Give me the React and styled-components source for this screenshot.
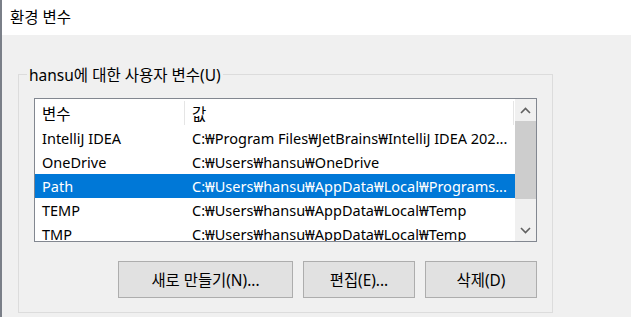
import React from "react";
import styled, { createGlobalStyle } from "styled-components";

const GlobalStyle = createGlobalStyle`
  html, body {
    margin: 0;
    padding: 0;
    background: #f0f0f0;
  }
  body {
    font-family: "Noto Sans", "Noto Sans CJK KR", sans-serif;
    font-size: 14.5px;
    color: #000;
  }
`;

const rows = [
  { name: "IntelliJ IDEA", value: "C:₩Program Files₩JetBrains₩IntelliJ IDEA 202..." },
  { name: "OneDrive", value: "C:₩Users₩hansu₩OneDrive" },
  { name: "Path", value: "C:₩Users₩hansu₩AppData₩Local₩Programs...", selected: true },
  { name: "TEMP", value: "C:₩Users₩hansu₩AppData₩Local₩Temp" },
  { name: "TMP", value: "C:₩Users₩hansu₩AppData₩Local₩Temp" },
];

export default function App() {
  return (
    <>
      <GlobalStyle />
      <Window>
        <TitleBar>환경 변수</TitleBar>
        <Body>
          <GroupBox>
            <Legend>hansu에 대한 사용자 변수(U)</Legend>
            <ListBox>
              <ListArea>
                <HeaderRow>
                  <HeaderCell $width={150}>변수</HeaderCell>
                  <HeaderCell $width={329}>값</HeaderCell>
                </HeaderRow>
                {rows.map((row) => (
                  <Row key={row.name} $selected={row.selected}>
                    <Cell $width={150}>{row.name}</Cell>
                    <Cell $width={329}>{row.value}</Cell>
                  </Row>
                ))}
              </ListArea>
              <ScrollBar>
                <ArrowButton>
                  <svg width="11" height="7" viewBox="0 0 11 7">
                    <path d="M1 6 L5.5 1.5 L10 6" fill="none" stroke="#606060" strokeWidth="1.6" />
                  </svg>
                </ArrowButton>
                <Track>
                  <Thumb />
                </Track>
                <ArrowButton>
                  <svg width="11" height="7" viewBox="0 0 11 7">
                    <path d="M1 1 L5.5 5.5 L10 1" fill="none" stroke="#606060" strokeWidth="1.6" />
                  </svg>
                </ArrowButton>
              </ScrollBar>
            </ListBox>
            <ButtonRow>
              <Button $width={175}>새로 만들기(N)...</Button>
              <Button $width={112}>편집(E)...</Button>
              <Button $width={112}>삭제(D)</Button>
            </ButtonRow>
          </GroupBox>
        </Body>
      </Window>
    </>
  );
}

const Window = styled.div`
  width: 631px;
  height: 317px;
  box-sizing: border-box;
  border-left: 2px solid #7a7f88;
  overflow: hidden;
  display: flex;
  flex-direction: column;
`;

const TitleBar = styled.div`
  height: 35px;
  flex-shrink: 0;
  background: #fff;
  display: flex;
  align-items: center;
  padding-left: 8px;
  font-size: 15.5px;
  padding-bottom: 2px;
  box-sizing: border-box;
`;

const Body = styled.div`
  padding: 39px 0 0 16px;
`;

const GroupBox = styled.div`
  width: 535px;
  box-sizing: border-box;
  border: 1px solid #dcdcdc;
  padding: 0 15px 14px 15px;
`;

const Legend = styled.div`
  width: fit-content;
  margin: -10px 0 0 -7px;
  padding: 0 2px;
  height: 20px;
  line-height: 20px;
  background: #f0f0f0;
  font-size: 15.5px;
`;

const ListBox = styled.div`
  margin-top: 13px;
  width: 503px;
  height: 144px;
  box-sizing: border-box;
  border: 1px solid #828790;
  background: #fff;
  display: flex;
  overflow: hidden;
`;

const ListArea = styled.div`
  flex: 1;
  overflow: hidden;
`;

const HeaderRow = styled.div`
  display: flex;
  height: 27px;
  font-size: 15.5px;
`;

const HeaderCell = styled.div`
  width: ${(p) => p.$width}px;
  flex-shrink: 0;
  box-sizing: border-box;
  padding-left: 7px;
  display: flex;
  align-items: center;
  border-right: 1px solid #e5e5e5;
  margin: 2px 0 1px;
`;

const Row = styled.div`
  display: flex;
  height: 24px;
  align-items: center;
  background: ${(p) => (p.$selected ? "#0078d7" : "transparent")};
  color: ${(p) => (p.$selected ? "#fff" : "#000")};
`;

const Cell = styled.div`
  width: ${(p) => p.$width}px;
  flex-shrink: 0;
  box-sizing: border-box;
  padding-left: 7px;
  white-space: nowrap;
  overflow: hidden;
`;

const ScrollBar = styled.div`
  width: 21px;
  flex-shrink: 0;
  background: #f0f0f0;
  display: flex;
  flex-direction: column;
`;

const ArrowButton = styled.div`
  height: 22px;
  display: flex;
  align-items: center;
  justify-content: center;
  flex-shrink: 0;
`;

const Track = styled.div`
  flex: 1;
  display: flex;
  flex-direction: column;
`;

const Thumb = styled.div`
  height: 78px;
  background: #cdcdcd;
`;

const ButtonRow = styled.div`
  display: flex;
  justify-content: flex-end;
  gap: 10px;
  margin-top: 19px;
`;

const Button = styled.button`
  width: ${(p) => p.$width}px;
  height: 37px;
  box-sizing: border-box;
  border: 1px solid #adadad;
  background: #e1e1e1;
  font-family: inherit;
  font-size: 15.4px;
  color: #000;
  padding: 0;
`;
